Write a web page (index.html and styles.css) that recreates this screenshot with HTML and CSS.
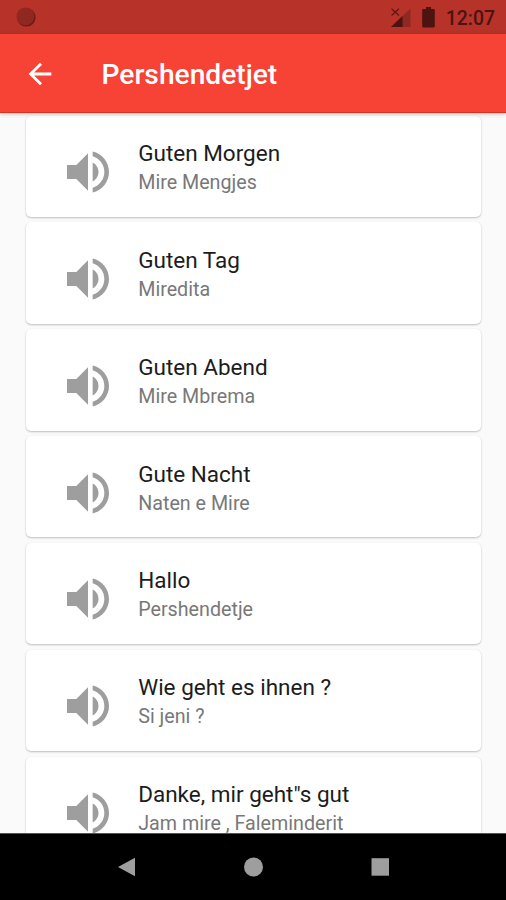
FILE: index.html
```html
<!DOCTYPE html>
<html lang="sq">
<head>
<meta charset="utf-8">
<title>Pershendetjet</title>
<link rel="stylesheet" href="styles.css">
</head>
<body>
<svg width="0" height="0" class="defs"><defs><symbol id="volume" viewBox="0 0 24 24"><path d="M3 9v6h4l5 5V4L7 9H3zm13.5 3c0-1.77-1.02-3.29-2.5-4.03v8.05c1.48-.73 2.5-2.25 2.5-4.02zM14 3.23v2.06c2.89.86 5 3.54 5 6.71s-2.11 5.85-5 6.71v2.06c4.01-.91 7-4.49 7-8.77s-2.99-7.86-7-8.77z"/></symbol></defs></svg>
<div class="screen">
  <div class="status">
    <svg class="record" width="20" height="20" viewBox="0 0 20 20"><circle cx="10.3" cy="10.3" r="9.3" fill="#6c1c17"/><circle cx="9.4" cy="9.4" r="8.9" fill="#902820"/></svg>
    <div class="indicators">
      <svg width="20" height="20" viewBox="0 0 20 20"><path d="M19.500 .5v18.500H0z" fill="#8f2822"/><path d="M11.500 8.100V19H0z" fill="#4c1310"/><path d="M.5 .8l7.500 6.700M8 .8L.5 7.500" stroke="#5c1814" stroke-width="1.200"/></svg>
      <svg class="battery" width="13" height="21" viewBox="0 0 13 21"><path d="M4 0h5v2h2.500q1.300 0 1.300 1.300v15.900q0 1.300-1.300 1.300h-10q-1.300 0-1.300-1.300V3.300Q.2 2 1.500 2H4z" fill="#4c1310"/></svg>
      <span class="clock">12:07</span>
    </div>
  </div>
  <header class="appbar">
    <svg class="back" width="34" height="34" viewBox="0 0 24 24"><path d="M20 11H7.830l5.590-5.590L12 4l-8 8 8 8 1.410-1.410L7.830 13H20v-2z" fill="#fff"/></svg>
    <h1>Pershendetjet</h1>
  </header>
  <main class="list">
    <article class="card"><svg class="volume"><use href="#volume"/></svg><div><h2>Guten Morgen</h2><p>Mire Mengjes</p></div></article>
    <article class="card"><svg class="volume"><use href="#volume"/></svg><div><h2>Guten Tag</h2><p>Miredita</p></div></article>
    <article class="card"><svg class="volume"><use href="#volume"/></svg><div><h2>Guten Abend</h2><p>Mire Mbrema</p></div></article>
    <article class="card"><svg class="volume"><use href="#volume"/></svg><div><h2>Gute Nacht</h2><p>Naten e Mire</p></div></article>
    <article class="card"><svg class="volume"><use href="#volume"/></svg><div><h2>Hallo</h2><p>Pershendetje</p></div></article>
    <article class="card"><svg class="volume"><use href="#volume"/></svg><div><h2>Wie geht es ihnen ?</h2><p>Si jeni ?</p></div></article>
    <article class="card"><svg class="volume"><use href="#volume"/></svg><div><h2>Danke, mir geht"s gut</h2><p>Jam mire , Faleminderit</p></div></article>
  </main>
  <nav class="navbar">
    <svg width="20" height="20" viewBox="0 0 20 20"><path d="M2 10l17-9.300v18.600z"/></svg>
    <svg width="20" height="20" viewBox="0 0 20 20"><circle cx="10.500" cy="10" r="9.500"/></svg>
    <svg width="20" height="20" viewBox="0 0 20 20"><path d="M1.500 1.200h17.500v17.500H1.500z"/></svg>
  </nav>
</div>
</body>
</html>
```
FILE: styles.css
```css
* {
  box-sizing: border-box;
}

body, h1, h2, p {
  margin: 0;
}

body {
  font-family: Roboto, "Liberation Sans", sans-serif;
}

.defs {
  display: block;
}

.screen {
  display: flex;
  flex-direction: column;
  width: 506px;
  height: 900px;
  overflow: hidden;
  background: #fafafa;
}

.status {
  display: flex;
  flex: 0 0 34px;
  justify-content: space-between;
  padding: 0 11px 0 16px;
  background: #b73229;
}

.record {
  margin-top: 7px;
}

.indicators {
  display: flex;
  align-items: flex-start;
  padding-top: 8px;
}

.battery {
  margin: -1px 10.500px 0 11px;
}

.clock {
  font-size: 19.400px;
  font-weight: 500;
  line-height: 21px;
  color: #4c1310;
}

.appbar {
  display: flex;
  flex: 0 0 79px;
  align-items: center;
  padding-left: 23px;
  background: #f64336;
  border-bottom: 1px solid #dc3022;
  box-shadow: 0 1px 4px rgba(0, 0, 0, 0.25);
  z-index: 1;
}

.back {
  margin-top: 1px;
}

.appbar h1 {
  margin-left: 44.500px;
  padding-top: 4px;
  font-size: 28.200px;
  font-weight: 500;
  line-height: 34px;
  color: #fff;
}

.list {
  display: flex;
  flex: 1;
  flex-direction: column;
  gap: 5.700px;
  min-height: 0;
  padding: 2.600px 25px 0 26px;
  overflow: hidden;
}

.card {
  display: flex;
  flex: 0 0 101.200px;
  align-items: flex-start;
  padding: 28.400px 0 0 33.600px;
  border-radius: 5px;
  background: #fff;
  box-shadow: 0 1px 2px rgba(0, 0, 0, 0.24), 0 0 1px rgba(0, 0, 0, 0.06);
}

.volume {
  width: 56px;
  height: 56px;
  margin-right: 22.600px;
  fill: #9e9e9e;
}

.card h2 {
  margin-top: -5.100px;
  font-size: 22.500px;
  font-weight: 400;
  line-height: 29px;
  color: #1c1c1c;
}

.card p {
  font-size: 19.700px;
  line-height: 29px;
  color: #787878;
}

.navbar {
  display: flex;
  flex: 0 0 67px;
  justify-content: center;
  align-items: center;
  gap: 107px;
  background: #000;
  border-top: 1px solid #555;
  fill: #9e9e9e;
}
```
